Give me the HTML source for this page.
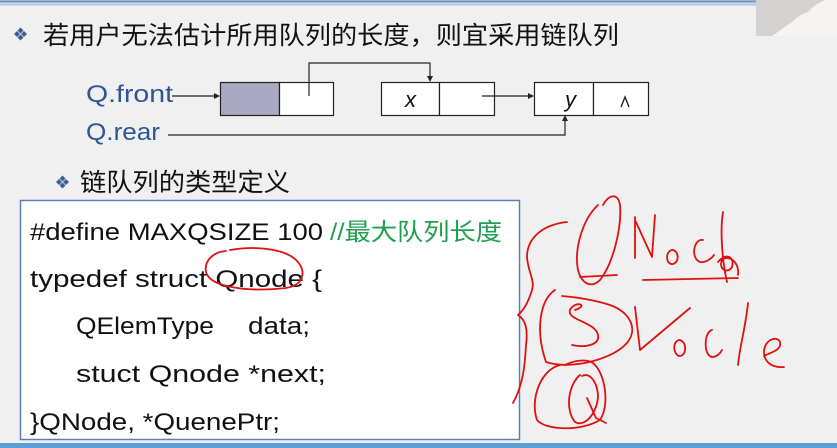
<!DOCTYPE html>
<html><head><meta charset="utf-8"><style>
html,body{margin:0;padding:0;width:837px;height:448px;overflow:hidden;background:#f0f0f0}
svg{display:block}
text{font-family:"Liberation Sans","Noto Sans CJK SC",sans-serif}
</style></head><body>
<svg width="837" height="448" viewBox="0 0 837 448" xmlns="http://www.w3.org/2000/svg">
<rect width="837" height="448" fill="#f0f0f0"/>
<rect x="0" y="0" width="837" height="1" fill="#9fb3cf"/>
<rect x="0" y="1" width="837" height="1.5" fill="#6f8fbf"/>
<rect x="0" y="2.5" width="837" height="1" fill="#e4ebf4"/>
<rect x="0" y="3.5" width="837" height="2" fill="#b4c6e0"/>
<!-- webcam -->
<rect x="756" y="0" width="81" height="36" fill="#d4d2d0"/>
<path d="M772,36 L792,22 Q800,14 808,12 Q815,4 825,0 L837,0 L837,36 Z" fill="#f6f4f2"/>
<!-- title -->
<g fill="#3f5f92">
<path d="M17,31 l3,3 -3,3 -3,-3z"/><path d="M24,31 l3,3 -3,3 -3,-3z"/><path d="M20.5,27.5 l3,3 -3,3 -3,-3z"/><path d="M20.5,34.5 l3,3 -3,3 -3,-3z"/>
<path d="M59,179 l3,3 -3,3 -3,-3z"/><path d="M66,179 l3,3 -3,3 -3,-3z"/><path d="M62.5,175.5 l3,3 -3,3 -3,-3z"/><path d="M62.5,182.5 l3,3 -3,3 -3,-3z"/>
</g>
<text x="43" y="44" font-size="25" fill="#111" textLength="576" lengthAdjust="spacingAndGlyphs">若用户无法估计所用队列的长度，则宜采用链队列</text>
<!-- diagram -->
<text x="86" y="102" font-size="24" fill="#2f5597" textLength="87" lengthAdjust="spacingAndGlyphs">Q.front</text>
<text x="86" y="140" font-size="24" fill="#2f5597" textLength="74" lengthAdjust="spacingAndGlyphs">Q.rear</text>
<g stroke="#222" stroke-width="1.2" fill="none">
<rect x="220.5" y="82.5" width="59" height="33" fill="#a9a9c3"/>
<rect x="279.5" y="82.5" width="54" height="33" fill="#fff"/>
<rect x="381.5" y="82.5" width="58" height="33" fill="#fff"/>
<rect x="439.5" y="82.5" width="55" height="33" fill="#fff"/>
<rect x="534.5" y="82.5" width="59" height="33" fill="#fff"/>
<rect x="593.5" y="82.5" width="55" height="33" fill="#fff"/>
<path d="M172,96 H216"/>
<path d="M309,96 V63 H430 V78"/>
<path d="M482,96 H530"/>
<path d="M168,135 H565 V120"/>
<path d="M621,107 L625,97 L629,107" stroke-width="1.4"/>
</g>
<g fill="#222">
<path d="M220,96 l-6,-3 v6z"/>
<path d="M430,82 l-3,-6 h6z"/>
<path d="M534,96 l-6,-3 v6z"/>
<path d="M565,115 l-3,6 h6z"/>
</g>
<text x="405" y="107" font-size="22" font-style="italic" fill="#111">x</text>
<text x="565" y="107" font-size="22" font-style="italic" fill="#111">y</text>
<!-- sub bullet -->
<text x="80" y="191" font-size="25" fill="#111" textLength="210" lengthAdjust="spacingAndGlyphs">链队列的类型定义</text>
<!-- code box -->
<rect x="20.5" y="200.5" width="499" height="239" fill="#fff" stroke="#5b7fb5" stroke-width="1.5"/>
<g font-size="24" fill="#111">
<text x="30" y="240" textLength="293" lengthAdjust="spacingAndGlyphs">#define MAXQSIZE 100</text>
<text x="330" y="240" fill="#1fa050" textLength="172" lengthAdjust="spacingAndGlyphs">//最大队列长度</text>
<text x="30" y="287" textLength="292" lengthAdjust="spacingAndGlyphs">typedef struct  Qnode {</text>
<text x="76" y="334" textLength="138" lengthAdjust="spacingAndGlyphs">QElemType</text>
<text x="248" y="334" textLength="62" lengthAdjust="spacingAndGlyphs">data;</text>
<text x="76" y="382" textLength="250" lengthAdjust="spacingAndGlyphs">stuct  Qnode  *next;</text>
<text x="30" y="430" textLength="250" lengthAdjust="spacingAndGlyphs">}QNode, *QuenePtr;</text>
</g>
<!-- red ink -->
<g stroke="#e01010" stroke-width="1.8" fill="none" stroke-linecap="round" stroke-linejoin="round">
<path d="M226,251 C212,252 204,262 206,272 C210,288 250,292 286,288 C304,285 306,272 298,262 C288,250 260,245 230,250"/>
<path d="M567,222 C540,225 527,240 527,257 C528,272 535,280 532,290 C529,300 524,310 518,315 C526,320 528,330 526,345 C525,365 523,385 513,403"/>
<path d="M598,205 C582,220 574,250 578,270 C582,285 592,288 600,280 C612,265 622,230 620,205 C618,192 608,195 603,205"/>
<path d="M580,277 L617,275"/>
<path d="M635,217 L635,258 M635,220 L652,257 L655,215"/>
<path d="M673,250 C666,250 665,262 671,264 C679,265 680,252 673,250"/>
<path d="M703,240 C694,238 690,258 700,262 C706,263 712,258 714,255"/>
<path d="M723,212 C720,230 722,260 727,282"/>
<path d="M718,262 C726,252 735,257 732,267 C728,274 718,270 722,260 C728,254 740,262 738,275"/>
<path d="M643,280 L738,278"/>
<path d="M575,310 C590,305 575,300 570,310 C566,320 596,322 598,335 C600,345 585,348 572,345"/>
<path d="M555,290 C540,300 535,330 546,362 C570,370 610,360 625,345 C640,330 630,312 610,305 C595,300 575,297 562,296"/>
<path d="M635,307 L640,350 L690,308"/>
<path d="M680,340 C673,340 672,353 679,356 C686,357 688,343 680,340"/>
<path d="M712,330 C704,332 703,355 712,357 C716,357 720,354 722,350"/>
<path d="M748,303 C746,325 740,345 738,365"/>
<path d="M764,356 C772,352 782,350 780,342 C777,335 764,340 764,352 C764,362 772,368 784,367"/>
<path d="M560,365 C540,370 530,400 537,420 C545,430 580,432 600,420 C610,405 605,375 595,365 C590,358 575,360 565,365"/>
<path d="M580,375 C568,385 565,410 575,422 C585,428 598,412 598,395 C597,382 590,372 582,376"/>
<path d="M587,398 L596,418 L606,423"/>
</g>
<!-- bottom bar -->
<rect x="0" y="443" width="837" height="5" fill="#5a9fd6"/>
</svg>
</body></html>
